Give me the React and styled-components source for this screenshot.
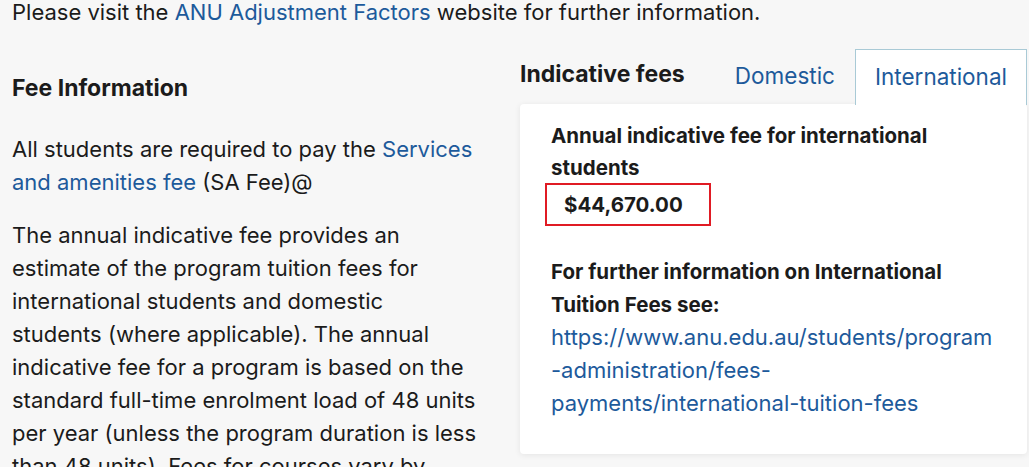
import styled, { createGlobalStyle } from 'styled-components';

const Global = createGlobalStyle`
  html, body {
    margin: 0;
    padding: 0;
    background: #f7f7f7;
    color: #1b1b1b;
    font-family: Inter, "Noto Sans", sans-serif;
    overflow: hidden;
  }
`;

const Page = styled.div`
  width: 1029px;
  height: 467px;
  padding: 0 2px 0 12px;
  box-sizing: border-box;
  overflow: hidden;
`;

const Intro = styled.p`
  margin: -4px 0 0;
  font-size: 22px;
  line-height: 33px;
`;

const Columns = styled.div`
  display: grid;
  grid-template-columns: 470px 1fr;
  column-gap: 38px;
  margin-top: 15px;
`;

const Left = styled.div`
  padding-top: 29px;
`;

const Heading = styled.h2`
  margin: 0 0 30px;
  font-size: 23px;
  line-height: 30px;
  font-weight: 700;
`;

const Para = styled.p`
  margin: 0 0 20px;
  font-size: 22px;
  line-height: 33px;
  white-space: nowrap;
`;

const A = styled.a`
  color: #1d5a9b;
  text-decoration: none;
`;

const Right = styled.div`
  display: flex;
  flex-direction: column;
  padding-top: 4px;
`;

const TabBar = styled.div`
  display: flex;
  align-items: flex-end;
  height: 56px;
`;

const TabTitle = styled.h3`
  margin: 0 auto 15px 0;
  font-size: 23px;
  line-height: 30px;
  font-weight: 700;
`;

const Tab = styled.button`
  height: 56px;
  padding: 0 19px 3px;
  border: 1px solid ${(p) => (p.$active ? '#a9cad6' : 'transparent')};
  border-bottom: none;
  background: ${(p) => (p.$active ? '#fff' : 'transparent')};
  color: #1d5a9b;
  font-family: inherit;
  font-size: 22.5px;
  margin-bottom: ${(p) => (p.$active ? '-1px' : '0')};
  position: relative;
  z-index: 1;
`;

const Card = styled.div`
  background: #fff;
  border-radius: 4px;
  box-shadow: 0 1px 6px rgba(0, 0, 0, 0.08);
  padding: 16px 30px 34px 31px;
`;

const CardHead = styled.h4`
  margin: 0;
  font-size: 20.5px;
  line-height: ${(p) => (p.$tight ? '32px' : '33px')};
  font-weight: 700;
`;

const Amount = styled.div`
  display: inline-block;
  margin: -1px 0 29px -6px;
  width: 166px;
  height: 43px;
  box-sizing: border-box;
  border: 2px solid #e01b24;
  padding-left: 17px;
  font-size: 20.5px;
  font-weight: 700;
  line-height: 39px;
`;

const Link = styled(A)`
  display: block;
  font-size: 22px;
  line-height: 33px;
`;

const feeLines = [
  'The annual indicative fee provides an',
  'estimate of the program tuition fees for',
  'international students and domestic',
  'students (where applicable). The annual',
  'indicative fee for a program is based on the',
  'standard full-time enrolment load of 48 units',
  'per year (unless the program duration is less',
  'than 48 units). Fees for courses vary by',
];

export default function App() {
  return (
    <Page>
      <Global />
      <Intro>
        Please visit the <A href="#">ANU Adjustment Factors</A> website for further information.
      </Intro>
      <Columns>
        <Left>
          <Heading>Fee Information</Heading>
          <Para>
            All students are required to pay the <A href="#">Services</A>
            <br />
            <A href="#">and amenities fee</A> (SA Fee)@
          </Para>
          <Para>
            {feeLines.map((line, i) => (
              <span key={i}>
                {line}
                {i < feeLines.length - 1 && <br />}
              </span>
            ))}
          </Para>
        </Left>
        <Right>
          <TabBar>
            <TabTitle>Indicative fees</TabTitle>
            <Tab>Domestic</Tab>
            <Tab $active>International</Tab>
          </TabBar>
          <Card>
            <CardHead $tight>Annual indicative fee for international students</CardHead>
            <Amount>$44,670.00</Amount>
            <CardHead>For further information on International Tuition Fees see:</CardHead>
            <Link href="#">
              https://www.anu.edu.au/students/program
              <br />
              -administration/fees-
              <br />
              payments/international-tuition-fees
            </Link>
          </Card>
        </Right>
      </Columns>
    </Page>
  );
}
